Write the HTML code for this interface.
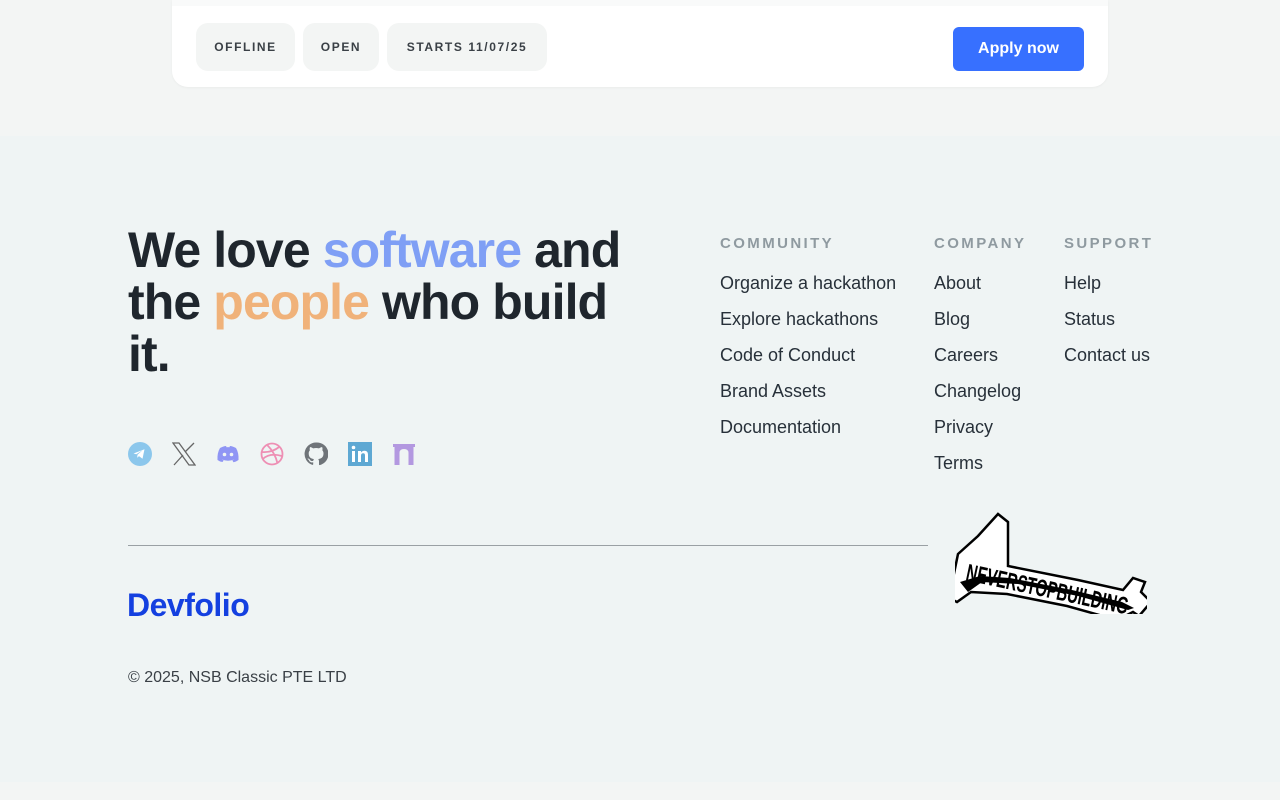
<!DOCTYPE html>
<html><head><style>
*{margin:0;padding:0;box-sizing:border-box}
body{width:1280px;height:800px;background:#f3f5f4;font-family:"Liberation Sans",sans-serif;position:relative;overflow:hidden;color:#273039}
.card{position:absolute;left:172px;top:0;width:936px;height:87px;background:#fff;border-radius:0 0 16px 16px;box-shadow:0 1px 2px rgba(0,0,0,.04)}
.strip{position:absolute;left:172px;top:0;width:936px;height:6px;background:#f9fafa}
.tag{position:absolute;top:23px;height:48px;background:#f3f5f4;border-radius:12px;font-size:12px;font-weight:bold;letter-spacing:1.6px;line-height:48px;text-align:center;color:#3a4046}
.btn{position:absolute;left:953px;top:27px;width:131px;height:44px;background:#3770ff;border-radius:6px;color:#fff;font-weight:bold;font-size:16px;line-height:44px;text-align:center}
footer{position:absolute;left:0;top:136px;width:1280px;height:646px;background:#eff4f4}
h1{position:absolute;left:128px;top:88px;width:505px;font-size:50px;line-height:52px;letter-spacing:-0.9px;color:#1f262d;font-weight:bold}
.col{position:absolute;top:99px}
.col h4{font-size:15px;letter-spacing:2.4px;color:#8f9aa0;font-weight:bold;margin-bottom:20px}
.col a{display:block;font-size:18px;color:#273039;height:36px;line-height:22px}
.line{position:absolute;left:128px;top:409px;width:800px;height:1px;background:#9aa0a4}
.logo{position:absolute;left:127px;top:451px;font-size:32px;font-weight:bold;color:#1440e0;letter-spacing:-.5px}
.copy{position:absolute;left:128px;top:533px;font-size:16px;color:#3a4046}
.ic{position:absolute;top:306px}
</style></head><body>
<div class="card"></div><div class="strip"></div>
<div class="tag" style="left:196px;width:99px">OFFLINE</div>
<div class="tag" style="left:303px;width:76px">OPEN</div>
<div class="tag" style="left:387px;width:160px">STARTS 11/07/25</div>
<div class="btn">Apply now</div>
<footer>
<h1>We love <span style="color:#7f9ff5">software</span> and the <span style="color:#f0b27a">people</span> who build it.</h1>
<svg class="ic" style="left:128px" width="24" height="24" viewBox="0 0 24 24"><circle cx="12" cy="12" r="12" fill="#8cc7ec"/><path d="M5.5 11.5l11-4.3-2 9.5-3.5-2.6-1.8 1.7.3-3 5-4.5-6.2 3.9z" fill="#fff"/></svg>
<svg class="ic" style="left:172px" width="24" height="24" viewBox="0 0 24 24"><path d="M1 1h6l16 22h-6zM2 23l9-10M22 1l-9 9" stroke="#666" stroke-width="1.3" fill="none"/></svg>
<svg class="ic" style="left:216px" width="24" height="24" viewBox="0 0 24 24"><path d="M4 6q4-2 6-2l.6 1.2q1.4-.2 2.8 0L14 4q2 0 6 2 3 5 2.5 12-2 1.6-5 2.2l-1.2-1.8 2-1q-6.3 2.6-12.6 0l2 1L6.5 20Q3.5 19.6 1.5 18 1 11 4 6z" fill="#8f95f4"/><circle cx="8.5" cy="12.5" r="1.8" fill="#eff4f4"/><circle cx="15.5" cy="12.5" r="1.8" fill="#eff4f4"/></svg>
<svg class="ic" style="left:260px" width="24" height="24" viewBox="0 0 24 24" fill="none" stroke="#ee8fb4" stroke-width="1.8"><circle cx="12" cy="12" r="10.5"/><path d="M7 2.8q8 8 10.5 18.5M1.8 10q10 1 18-5.5M2.8 17q7-6.5 19-3"/></svg>
<svg class="ic" style="left:304px" width="24" height="24" viewBox="0 0 24 24"><path d="M12 .5a11.5 11.5 0 0 0-3.6 22.4c.6.1.8-.3.8-.6v-2c-3.2.7-3.900-1.4-3.900-1.4-.5-1.3-1.3-1.7-1.3-1.7-1-.7.1-.7.1-.7 1.2.1 1.8 1.2 1.8 1.2 1 1.8 2.7 1.3 3.4 1 .1-.8.4-1.3.7-1.6-2.6-.3-5.3-1.3-5.3-5.7 0-1.3.5-2.3 1.2-3.1-.1-.3-.5-1.5.1-3.1 0 0 1-.3 3.2 1.2a11 11 0 0 1 5.8 0c2.2-1.5 3.2-1.2 3.2-1.2.6 1.6.2 2.8.1 3.1.7.8 1.2 1.8 1.2 3.1 0 4.4-2.7 5.4-5.3 5.700.4.4.8 1.1.8 2.2v3.2c0 .3.2.7.8.6A11.5 11.5 0 0 0 12 .5z" fill="#6f7479"/></svg>
<svg class="ic" style="left:348px" width="24" height="24" viewBox="0 0 24 24"><rect width="24" height="24" fill="#5ea8d3"/><rect x="4" y="9" width="3" height="11" fill="#fff"/><circle cx="5.5" cy="5.5" r="1.8" fill="#fff"/><path d="M10 9h3v1.5q1.2-1.8 3.5-1.8 3.5 0 3.5 4V20h-3v-6.5q0-2.2-1.8-2.2-2.2 0-2.2 2.5V20h-3z" fill="#fff"/></svg>
<svg class="ic" style="left:392px" width="24" height="24" viewBox="0 0 24 24"><path d="M1 2h22v3h-1.5v18h-5V11q0-4-4.5-4T7.5 11v12h-5V5H1z" fill="#b398e0"/></svg>
<div class="col" style="left:720px"><h4>COMMUNITY</h4><a>Organize a hackathon</a><a>Explore hackathons</a><a>Code of Conduct</a><a>Brand Assets</a><a>Documentation</a></div>
<div class="col" style="left:934px"><h4>COMPANY</h4><a>About</a><a>Blog</a><a>Careers</a><a>Changelog</a><a>Privacy</a><a>Terms</a></div>
<div class="col" style="left:1064px"><h4>SUPPORT</h4><a>Help</a><a>Status</a><a>Contact us</a></div>
<div class="line"></div>
<svg style="position:absolute;left:955px;top:376px" width="192" height="102" viewBox="0 0 192 102">
<path d="M3 42l20-18 20-22 10 8 0 44 70 14 45 10 10-12 12 4-4 10 10 10-12 14-6-4-16 8-50-14-60-12-36-2-14 10-8-4z" fill="#fff" stroke="#000" stroke-width="2.5"/>
<path d="M5 70l8 10 14-10 36 2 60 12 50 14 6-2-12-6-50-12-62-12-30-2z" fill="#000"/>
<text x="10" y="68" font-family="Liberation Sans Narrow,Liberation Sans,sans-serif" font-weight="bold" font-size="24" transform="rotate(12 10 68)" textLength="165" lengthAdjust="spacingAndGlyphs">NEVERSTOPBUILDING</text>
</svg>
<div class="logo">Devfolio</div>
<div class="copy">© 2025, NSB Classic PTE LTD</div>
</footer>
</body></html>
